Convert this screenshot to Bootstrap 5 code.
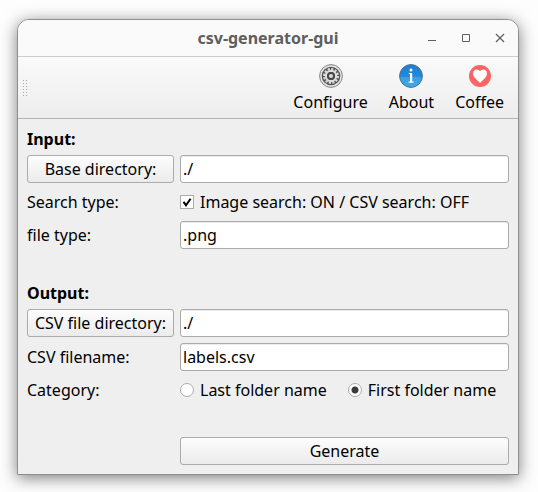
<!DOCTYPE html>
<html lang="en">
<head>
<meta charset="utf-8">
<meta name="viewport" content="width=device-width, initial-scale=1">
<title>csv-generator-gui</title>
<link href="https://cdn.jsdelivr.net/npm/bootstrap@5.3.0/dist/css/bootstrap.min.css" rel="stylesheet">
<style>
  body {
    background: #fdfdfd;
    color: #000;
    font-family: "Noto Sans", "Open Sans", sans-serif;
    font-size: 16px;
    line-height: 20px;
    padding: 19px 19px 17px 17px;
  }
  .app-window {
    background: #efefef;
    border: 1px solid #8f8f8f;
    border-radius: 12px 12px 0 0;
    box-shadow: 0 3px 16px rgba(0, 0, 0, .5);
  }
  .title-bar {
    background: #fafafa;
    border-bottom: 1px solid #cdcdcd;
    border-radius: 11px 11px 0 0;
    color: #5e5e5e;
    height: 37px;
  }
  .title-bar h1 { font-size: 16px; line-height: 20px; }
  .window-controls { right: 9px; top: 8px; gap: 16px; }
  .window-controls button { width: 18px; height: 20px; color: #5e5e5e; }
  .tool-bar {
    background: linear-gradient(#fafafa, #ededed);
    border-bottom: 1px solid #b4b4b4;
    height: 62px;
    padding: 0 12px 0 4px;
  }
  .grip {
    width: 6px;
    height: 18px;
    background: radial-gradient(circle, #a9a9a9 0 1px, transparent 1px) 0 0 / 3px 3px;
  }
  .tool-items { gap: 17px; }
  .tool-items button { color: #000; gap: 4px; padding: 0 2px; }
  .form-area {
    grid-template-columns: 147px minmax(0, 1fr);
    gap: 6px;
    padding: 10px 9px 9px;
  }
  .form-area h2 { grid-column: 1 / -1; font-size: 16px; line-height: 20px; }
  .section-start { margin-top: 28px; }
  .push-button {
    --bs-btn-padding-x: 0;
    --bs-btn-padding-y: 3px;
    --bs-btn-font-size: 16px;
    --bs-btn-line-height: 20px;
    --bs-btn-border-radius: 3px;
    --bs-btn-border-color: #ababab;
    --bs-btn-color: #000;
    --bs-btn-hover-border-color: #8f8f8f;
    --bs-btn-active-border-color: #8f8f8f;
    background: linear-gradient(#fdfdfd, #ebebeb);
    white-space: nowrap;
  }
  .text-field {
    border: 1px solid #ababab;
    border-radius: 3px;
    box-shadow: inset 0 1px 0 #ececec;
    color: #000;
    font-size: 16px;
    line-height: 20px;
    padding: 3px 2px;
  }
  .tick, .dot {
    appearance: none;
    flex: none;
    width: 14px;
    height: 14px;
    margin: 0;
    border: 1px solid #ababab;
    background: #fff center / 12px 12px no-repeat;
  }
  .tick:checked {
    background-image: url("data:image/svg+xml,%3Csvg xmlns='http://www.w3.org/2000/svg' viewBox='0 0 12 12'%3E%3Cpath d='M2.5 5.8L5 9.3L9.6 2.7' fill='none' stroke='%23000' stroke-width='2'/%3E%3C/svg%3E");
  }
  .dot { border-radius: 50%; }
  .dot:checked { background-image: radial-gradient(circle, #3c3c3c 3px, transparent 4px); }
  .option { gap: 6px; white-space: nowrap; }
  .option-row { min-height: 26px; column-gap: 21px; }
</style>
</head>
<body>
<main class="app-window">
  <header class="title-bar position-relative d-flex align-items-center justify-content-center">
    <h1 class="m-0 fw-bold">csv-generator-gui</h1>
    <div class="window-controls position-absolute d-flex">
      <button type="button" class="border-0 bg-transparent p-0 d-flex align-items-center justify-content-center" aria-label="Minimize">
        <svg width="10" height="10" viewBox="0 0 10 10"><path d="M1 7.5H9" stroke="currentColor"/></svg>
      </button>
      <button type="button" class="border-0 bg-transparent p-0 d-flex align-items-center justify-content-center" aria-label="Maximize">
        <svg width="10" height="10" viewBox="0 0 10 10"><path d="M1.5 1.5H8.5V8.5H1.5Z" fill="none" stroke="currentColor"/></svg>
      </button>
      <button type="button" class="border-0 bg-transparent p-0 d-flex align-items-center justify-content-center" aria-label="Close">
        <svg width="10" height="10" viewBox="0 0 10 10"><path d="M1 1L9 9M9 1L1 9" stroke="currentColor" stroke-width="1.2"/></svg>
      </button>
    </div>
  </header>

  <div class="tool-bar d-flex align-items-center justify-content-between" role="toolbar" aria-label="Main">
    <span class="grip"></span>
    <div class="tool-items d-flex">
      <button type="button" class="border-0 bg-transparent d-flex flex-column align-items-center">
        <svg width="24" height="24" viewBox="0 0 24 24">
          <circle cx="12" cy="12" r="11.4" fill="#e4e4e4" stroke="#858585"/>
          <circle cx="12" cy="12" r="9.3" fill="#555"/>
          <circle cx="12" cy="12" r="7" fill="none" stroke="#dedede" stroke-width="2" stroke-dasharray="2.2 1.465"/>
          <circle cx="12" cy="12" r="5.1" fill="none" stroke="#dedede" stroke-width="2.2"/>
          <circle cx="12" cy="12" r="3" fill="none" stroke="#484848" stroke-width="1.8"/>
          <circle cx="12" cy="12" r="2.1" fill="#d8d8d8"/>
        </svg>
        Configure
      </button>
      <button type="button" class="border-0 bg-transparent d-flex flex-column align-items-center">
        <svg width="24" height="24" viewBox="0 0 24 24">
          <defs>
            <linearGradient id="infoFill" x2="0" y2="1">
              <stop offset="0" stop-color="#1d7fd0"/><stop offset=".52" stop-color="#2389da"/>
              <stop offset=".54" stop-color="#3c9de2"/><stop offset="1" stop-color="#43a8ea"/>
            </linearGradient>
          </defs>
          <circle cx="12" cy="12" r="11.4" fill="url(#infoFill)" stroke="#496f8f"/>
          <circle cx="12" cy="5.9" r="1.5" fill="#fff"/>
          <path d="M9.8 9H13.2V17.6H14.6V18.7H9.6V17.6H11V10.1H9.8Z" fill="#fff"/>
        </svg>
        About
      </button>
      <button type="button" class="border-0 bg-transparent d-flex flex-column align-items-center">
        <svg width="24" height="24" viewBox="0 0 24 24">
          <circle cx="12" cy="12" r="11" fill="#f96464"/>
          <path d="M12 19C10.5 17 5 13.5 5 9.4C5 6.8 6.8 5.4 8.7 5.4C10.2 5.4 11.3 6.1 12 7.2C12.7 6.1 13.8 5.4 15.3 5.4C17.2 5.4 19 6.8 19 9.4C19 13.5 13.5 17 12 19Z" fill="#fff"/>
        </svg>
        Coffee
      </button>
    </div>
  </div>

  <form class="form-area d-grid align-items-center">
    <h2 class="m-0 fw-bold">Input:</h2>
    <button type="button" class="btn push-button" id="baseDirButton">Base directory:</button>
    <input type="text" class="form-control text-field" value="./" aria-labelledby="baseDirButton">

    <label for="searchType">Search type:</label>
    <div class="option-row d-flex align-items-center">
      <label class="option d-flex align-items-center">
        <input type="checkbox" class="tick" id="searchType" checked>
        Image search: ON / CSV search: OFF
      </label>
    </div>

    <label for="fileType">file type:</label>
    <input type="text" class="form-control text-field" id="fileType" value=".png">

    <h2 class="section-start mb-0 fw-bold">Output:</h2>
    <button type="button" class="btn push-button" id="csvDirButton">CSV file directory:</button>
    <input type="text" class="form-control text-field" value="./" aria-labelledby="csvDirButton">

    <label for="csvName">CSV filename:</label>
    <input type="text" class="form-control text-field" id="csvName" value="labels.csv">

    <span id="categoryLabel">Category:</span>
    <div class="option-row d-flex flex-wrap align-items-center" role="radiogroup" aria-labelledby="categoryLabel">
      <label class="option d-flex align-items-center"><input type="radio" class="dot" name="category"> Last folder name</label>
      <label class="option d-flex align-items-center"><input type="radio" class="dot" name="category" checked> First folder name</label>
    </div>

    <span></span>
    <button type="button" class="btn push-button section-start">Generate</button>
  </form>
</main>
<script src="https://cdn.jsdelivr.net/npm/bootstrap@5.3.0/dist/js/bootstrap.bundle.min.js"></script>
</body>
</html>
